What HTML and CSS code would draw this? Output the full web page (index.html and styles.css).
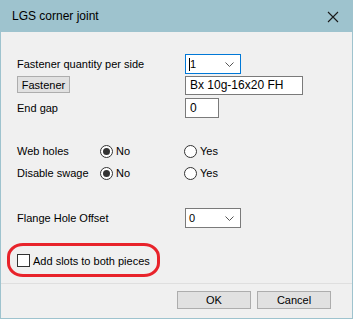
FILE: index.html
```html
<!DOCTYPE html>
<html lang="en">
<head>
    <meta charset="UTF-8">
    <title>LGS corner joint</title>
    <link rel="stylesheet" href="styles.css">
</head>
<body>
    <div id="dialog">
        <div class="titlebar">
            <span class="title">LGS corner joint</span>
            <svg class="close" width="12" height="12" viewBox="0 0 12 12">
                <path d="M1 1 L11 11 M11 1 L1 11" stroke="#1a1a1a" stroke-width="1.1" fill="none"/>
            </svg>
        </div>
        <div class="content">
            <div class="row field-row first">
                <label>Fastener quantity per side</label>
                <div class="combo focused">
                    <span class="value"><span class="caret"></span>1</span>
                    <svg class="chev" width="9" height="5" viewBox="0 0 9 5"><path d="M0.5 0.5 L4.5 4.5 L8.5 0.5" stroke="#555" fill="none"/></svg>
                </div>
            </div>
            <div class="row field-row second">
                <button class="btn small">Fastener</button>
                <div class="textbox wide">Bx 10g-16x20 FH</div>
            </div>
            <div class="row field-row third">
                <label>End gap</label>
                <div class="textbox narrow">0</div>
            </div>

            <div class="row radio-row web">
                <label>Web holes</label>
                <span class="radio-opt"><span class="radio checked"></span>No</span>
                <span class="radio-opt"><span class="radio"></span>Yes</span>
            </div>
            <div class="row radio-row swage">
                <label>Disable swage</label>
                <span class="radio-opt"><span class="radio checked"></span>No</span>
                <span class="radio-opt"><span class="radio"></span>Yes</span>
            </div>

            <div class="row field-row flange">
                <label>Flange Hole Offset</label>
                <div class="combo">
                    <span class="value">0</span>
                    <svg class="chev" width="9" height="5" viewBox="0 0 9 5"><path d="M0.5 0.5 L4.5 4.5 L8.5 0.5" stroke="#555" fill="none"/></svg>
                </div>
            </div>

            <div class="check-row">
                <span class="checkbox"></span>
                <span>Add slots to both pieces</span>
                <div class="highlight"></div>
            </div>
        </div>
        <div class="footer">
            <button class="btn">OK</button>
            <button class="btn">Cancel</button>
        </div>
    </div>
</body>
</html>
```

FILE: styles.css
```css
body {
    margin: 0;
    padding: 0;
    font-family: "Liberation Sans", Arial, sans-serif;
    font-size: 11px;
    color: #000;
    background: #fff;
}
#dialog {
    width: 353px;
    height: 319px;
    box-sizing: border-box;
    border: 1px solid #9ec3ce;
    border-top: none;
    background-color: #f0f0f0;
    display: flex;
    flex-direction: column;
}
.titlebar {
    height: 32px;
    margin: 0 -1px;
    background-color: #9ec3ce;
    display: flex;
    align-items: center;
    justify-content: space-between;
    padding: 0 14px 0 12px;
}
.title {
    font-size: 12px;
    color: #000;
    padding-bottom: 1px;
}
.close {
    margin-top: 1px;
}
.content {
    flex: 1;
    padding-left: 16px;
    display: flex;
    flex-direction: column;
}
.row {
    display: grid;
    align-items: center;
}
.field-row {
    grid-template-columns: 168px auto;
    justify-items: start;
}
.first {
    margin-top: 22px;
    height: 20px;
}
.second {
    margin-top: 2px;
    height: 19px;
    align-items: start;
}
.third {
    margin-top: 3px;
    height: 20px;
}
.radio-row {
    grid-template-columns: 83px 84px auto;
    height: 16px;
}
.web {
    margin-top: 25px;
}
.swage {
    margin-top: 6px;
}
.flange {
    margin-top: 27px;
    height: 20px;
}
.combo {
    width: 56px;
    height: 20px;
    box-sizing: border-box;
    border: 1px solid #7a7a7a;
    background: #fff;
    display: flex;
    align-items: center;
    justify-content: space-between;
    padding: 0 6px 0 3px;
}
.combo.focused {
    border-color: #0078d7;
}
.caret {
    display: inline-block;
    width: 1px;
    height: 13px;
    background: #000;
    vertical-align: -3px;
}
.chev {
    margin-top: 1px;
}
.textbox {
    height: 19px;
    box-sizing: border-box;
    border: 1px solid #7a7a7a;
    background: #fff;
    padding: 0 4px;
    line-height: 17px;
}
.textbox.wide {
    width: 118px;
    font-size: 12px;
}
.textbox.narrow {
    width: 34px;
    height: 20px;
    line-height: 18px;
    font-size: 12px;
}
.btn {
    font-family: inherit;
    font-size: 11px;
    height: 18px;
    width: 74px;
    padding: 0;
    border: 1px solid #adadad;
    background-color: #e1e1e1;
    color: #000;
}
.btn.small {
    width: 53px;
    height: 17px;
}
.radio-opt {
    display: flex;
    align-items: center;
    gap: 3px;
}
.radio {
    width: 13px;
    height: 13px;
    box-sizing: border-box;
    border: 1px solid #333;
    border-radius: 50%;
    background: #fff;
    display: flex;
    align-items: center;
    justify-content: center;
}
.radio.checked::after {
    content: "";
    width: 7px;
    height: 7px;
    border-radius: 50%;
    background: #333;
}
.check-row {
    position: relative;
    margin-top: 26px;
    height: 13px;
    display: flex;
    align-items: center;
    gap: 3px;
}
.checkbox {
    width: 13px;
    height: 13px;
    box-sizing: border-box;
    border: 1px solid #333;
    background: #fff;
}
.highlight {
    position: absolute;
    left: -10px;
    top: -11px;
    width: 153px;
    height: 34px;
    box-sizing: border-box;
    border: 3px solid #e8232b;
    border-radius: 16px / 14px;
}
.footer {
    height: 35px;
    border-top: 1px solid #dfdfdf;
    display: flex;
    justify-content: flex-end;
    align-items: flex-start;
    gap: 6px;
    padding: 7px 21px 0 0;
    box-sizing: border-box;
}
```
